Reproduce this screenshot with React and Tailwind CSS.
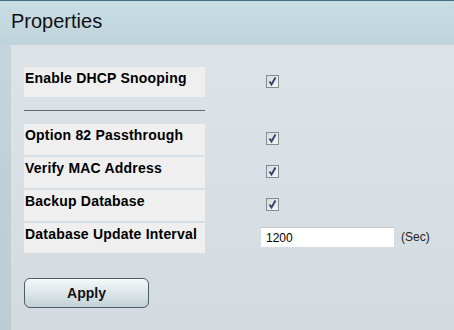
import React from "react";

function Check() {
  return (
    <div className="w-[13px] h-[13px] border border-[#8a8a8a] bg-gradient-to-br from-[#d8dade] to-[#f7f7f9] flex items-center justify-center">
      <svg width="11" height="11" viewBox="0 0 11 11">
        <path d="M2.5 5.5 L4.5 8.5 L8.5 1.5" fill="none" stroke="#36406c" strokeWidth="1.9" />
      </svg>
    </div>
  );
}

function Row({ label, children, first }) {
  return (
    <div className={`flex ${first ? "h-[30px]" : "h-[31px]"}`}>
      <div className="w-[181px] bg-[#efefef] pl-[1px] pt-[3px] text-[14px] tracking-[0.2px] font-bold text-black leading-[17px] whitespace-nowrap">
        {label}
      </div>
      <div className="pl-[61px] pt-[8px]">{children}</div>
    </div>
  );
}

export default function App() {
  return (
    <div
      className="w-[454px] h-[330px] overflow-hidden flex flex-col bg-[#d5dce2]"
      style={{ fontFamily: '"Liberation Sans", Arial, sans-serif' }}
    >
      <div className="h-[1px] bg-[#3f6f80]" />
      <div className="h-[44px] bg-gradient-to-b from-[#c9dde4] to-[#bfd3db] pl-[11px] pt-[9px]">
        <div className="text-[20px] leading-[23px] text-[#111]">Properties</div>
      </div>
      <div className="flex flex-1">
        <div className="w-[11px] bg-gradient-to-b from-[#c4d5dd] to-[#bccbd4]" />
        <div className="flex-1 bg-gradient-to-b from-[#dde4e9] to-[#d3dae0] pl-[13px] pt-[22px]">
          <Row label="Enable DHCP Snooping" first>
            <Check />
          </Row>
          <div className="w-[181px] mt-[13px] h-[1px] bg-[#6a6a6a]" />
          <div className="mt-[13px] flex flex-col gap-[2px]">
            <Row label="Option 82 Passthrough">
              <Check />
            </Row>
            <Row label="Verify MAC Address">
              <Check />
            </Row>
            <Row label="Backup Database">
              <Check />
            </Row>
            <div className="flex h-[30px]">
              <div className="w-[181px] bg-[#efefef] pl-[1px] pt-[3px] text-[14px] tracking-[0.2px] font-bold text-black leading-[17px] whitespace-nowrap">
                Database Update Interval
              </div>
              <div className="pl-[56px] pt-[4px] flex items-start">
                <input
                  readOnly
                  value="1200"
                  className="w-[133px] h-[20px] bg-white border-t border-[#c8c8c8] px-[5px] text-[12px] text-black outline-none"
                  style={{ fontFamily: '"Liberation Sans", Arial, sans-serif' }}
                />
                <span className="ml-[7px] mt-[3px] text-[12px] leading-[14px] text-[#222]">(Sec)</span>
              </div>
            </div>
          </div>
          <button
            className="mt-[25px] w-[125px] h-[30px] rounded-[6px] border border-[#4d5d64] bg-gradient-to-b from-[#f4f8f9] via-[#dde6ea] to-[#c2d0d7] text-[14px] font-bold text-[#111] shadow-[inset_0_1px_0_#ffffff]"
            style={{ fontFamily: '"Liberation Sans", Arial, sans-serif' }}
          >
            Apply
          </button>
        </div>
      </div>
    </div>
  );
}
